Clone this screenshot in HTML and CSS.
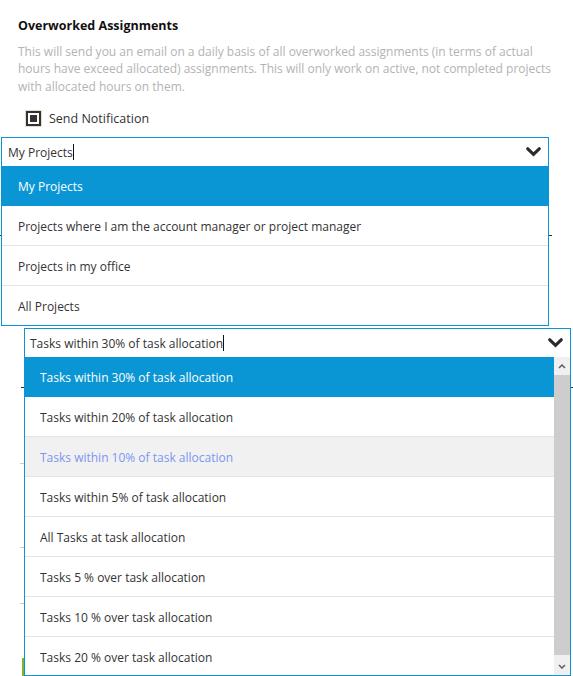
FILE: index.html
```html
<!DOCTYPE html>
<html>
<head>
<meta charset="utf-8">
<link rel="stylesheet" href="styles.css">
</head>
<body>
<div class="page">
  <div class="ghost">
    <span class="tick t1"></span>
    <span class="tick t2"></span>
    <span class="tick t3"></span>
    <span class="tick t4"></span>
    <span class="gline g1"></span>
    <span class="gline g2"></span>
    <span class="gline g3"></span>
    <span class="green"></span>
  </div>

  <h3 class="title">Overworked Assignments</h3>
  <p class="desc">This will send you an email on a daily basis of all overworked assignments (in terms of actual hours have exceed allocated) assignments. This will only work on active, not completed projects with allocated hours on them.</p>

  <label class="check-row">
    <span class="checkbox"><span class="checkbox-fill"></span></span>
    <span class="check-label">Send Notification</span>
  </label>

  <div class="select select-projects">
    <div class="select-input">
      <span class="select-value">My Projects</span><span class="caret"></span>
      <svg class="chevron" width="15" height="10" viewBox="0 0 15 10"><path d="M1.8 1.8 L7.5 7.3 L13.2 1.8" fill="none" stroke="#2b2b2b" stroke-width="3.2" stroke-linejoin="miter" stroke-linecap="round"/></svg>
    </div>
    <ul class="options">
      <li class="option selected">My Projects</li>
      <li class="option">Projects where I am the account manager or project manager</li>
      <li class="option">Projects in my office</li>
      <li class="option last">All Projects</li>
    </ul>
  </div>

  <div class="select select-tasks">
    <div class="select-input">
      <span class="select-value">Tasks within 30% of task allocation</span><span class="caret"></span>
      <svg class="chevron" width="15" height="10" viewBox="0 0 15 10"><path d="M1.8 1.8 L7.5 7.3 L13.2 1.8" fill="none" stroke="#2b2b2b" stroke-width="3.2" stroke-linejoin="miter" stroke-linecap="round"/></svg>
    </div>
    <div class="list-wrap">
      <ul class="options">
        <li class="option selected">Tasks within 30% of task allocation</li>
        <li class="option">Tasks within 20% of task allocation</li>
        <li class="option hover">Tasks within 10% of task allocation</li>
        <li class="option">Tasks within 5% of task allocation</li>
        <li class="option">All Tasks at task allocation</li>
        <li class="option">Tasks 5 % over task allocation</li>
        <li class="option">Tasks 10 % over task allocation</li>
        <li class="option">Tasks 20 % over task allocation</li>
      </ul>
      <div class="scrollbar">
        <div class="sb-btn"><svg width="8" height="5" viewBox="0 0 8 5"><path d="M1 4 L4 1 L7 4" fill="none" stroke="#606060" stroke-width="1.5"/></svg></div>
        <div class="sb-thumb"></div>
        <div class="sb-btn"><svg width="8" height="5" viewBox="0 0 8 5"><path d="M1 1 L4 4 L7 1" fill="none" stroke="#606060" stroke-width="1.5"/></svg></div>
      </div>
    </div>
  </div>
</div>
</body>
</html>
```
FILE: styles.css
```css
* { box-sizing: border-box; }
html, body { margin: 0; padding: 0; background: #fff; }
body {
  font-family: "Open Sans", "Noto Sans", "Liberation Sans", sans-serif;
  font-size: 12px;
  color: #333;
  width: 573px;
  height: 676px;
  overflow: hidden;
}
.page {
  position: relative;
  padding-top: 17px;
  height: 676px;
}
.ghost { position: absolute; inset: 0; z-index: 0; }
.tick { position: absolute; height: 1px; background: #333; width: 3px; }
.t1 { left: 0; top: 235px; }
.t2 { left: 549px; top: 235px; }
.t3 { left: 21px; top: 387px; }
.t4 { left: 570px; top: 387px; }
.gline { position: absolute; height: 1px; background: #ccc; width: 4px; left: 20px; }
.g1 { top: 463px; }
.g2 { top: 547px; }
.g3 { top: 603px; }
.green { position: absolute; left: 22px; top: 658px; width: 3px; height: 18px; background: #7cb82f; }

.title {
  position: relative;
  margin: 0 0 0 18px;
  font-size: 12.5px;
  font-weight: 700;
  line-height: 18px;
  color: #111;
}
.desc {
  position: relative;
  margin: 7.5px 0 0 18px;
  width: 545px;
  font-size: 12px;
  line-height: 17.5px;
  color: #b3b3b3;
}
.check-row {
  position: relative;
  display: flex;
  align-items: center;
  gap: 8px;
  margin: 15px 0 0 26px;
  height: 17px;
}
.checkbox {
  width: 15px;
  height: 15px;
  border: 2px solid #333;
  display: flex;
  align-items: center;
  justify-content: center;
  box-shadow: 0 0 0 1px #e8dccc;
}
.checkbox-fill { width: 7px; height: 7px; background: #333; }
.check-label { font-size: 12.5px; color: #333; }

.select {
  position: relative;
  z-index: 1;
  border: 1px solid #0a96d4;
  background: #fff;
}
.select-projects { margin: 10px 0 0 1px; width: 548px; }
.select-tasks { margin: 2px 0 0 24px; width: 547px; }

.select-input {
  height: 28px;
  display: flex;
  align-items: center;
  padding-left: 6px;
  padding-right: 7px;
  color: #333;
}
.select-tasks .select-input { padding-left: 5px; }
.caret {
  display: inline-block;
  width: 1px;
  height: 16px;
  background: #111;
}
.chevron { margin-left: auto; }

.options { list-style: none; margin: 0; padding: 0; }
.option {
  height: 40px;
  padding-top: 3px;
  line-height: 35px;
  padding-left: 16px;
  border-bottom: 1px solid #e4e4e4;
  color: #333;
  white-space: nowrap;
}
.option.last { border-bottom: none; height: 39px; }
.option.selected { background: #0a96d4; color: #fff; border-bottom-color: #0a96d4; }
.option.hover { background: #f1f1f1; color: #7b96f2; }
.select-tasks .option { padding-left: 15px; }

.list-wrap {
  display: flex;
  height: 318px;
  overflow: hidden;
}
.list-wrap .options { flex: 1; }
.scrollbar {
  width: 16px;
  flex: none;
  display: flex;
  flex-direction: column;
  background: #f0f0f0;
}
.sb-btn {
  height: 18px;
  display: flex;
  align-items: center;
  justify-content: center;
  flex: none;
}
.sb-thumb {
  flex: 1;
  background: #cdcdcd;
  margin: 0 0 2px 0;
}
```
